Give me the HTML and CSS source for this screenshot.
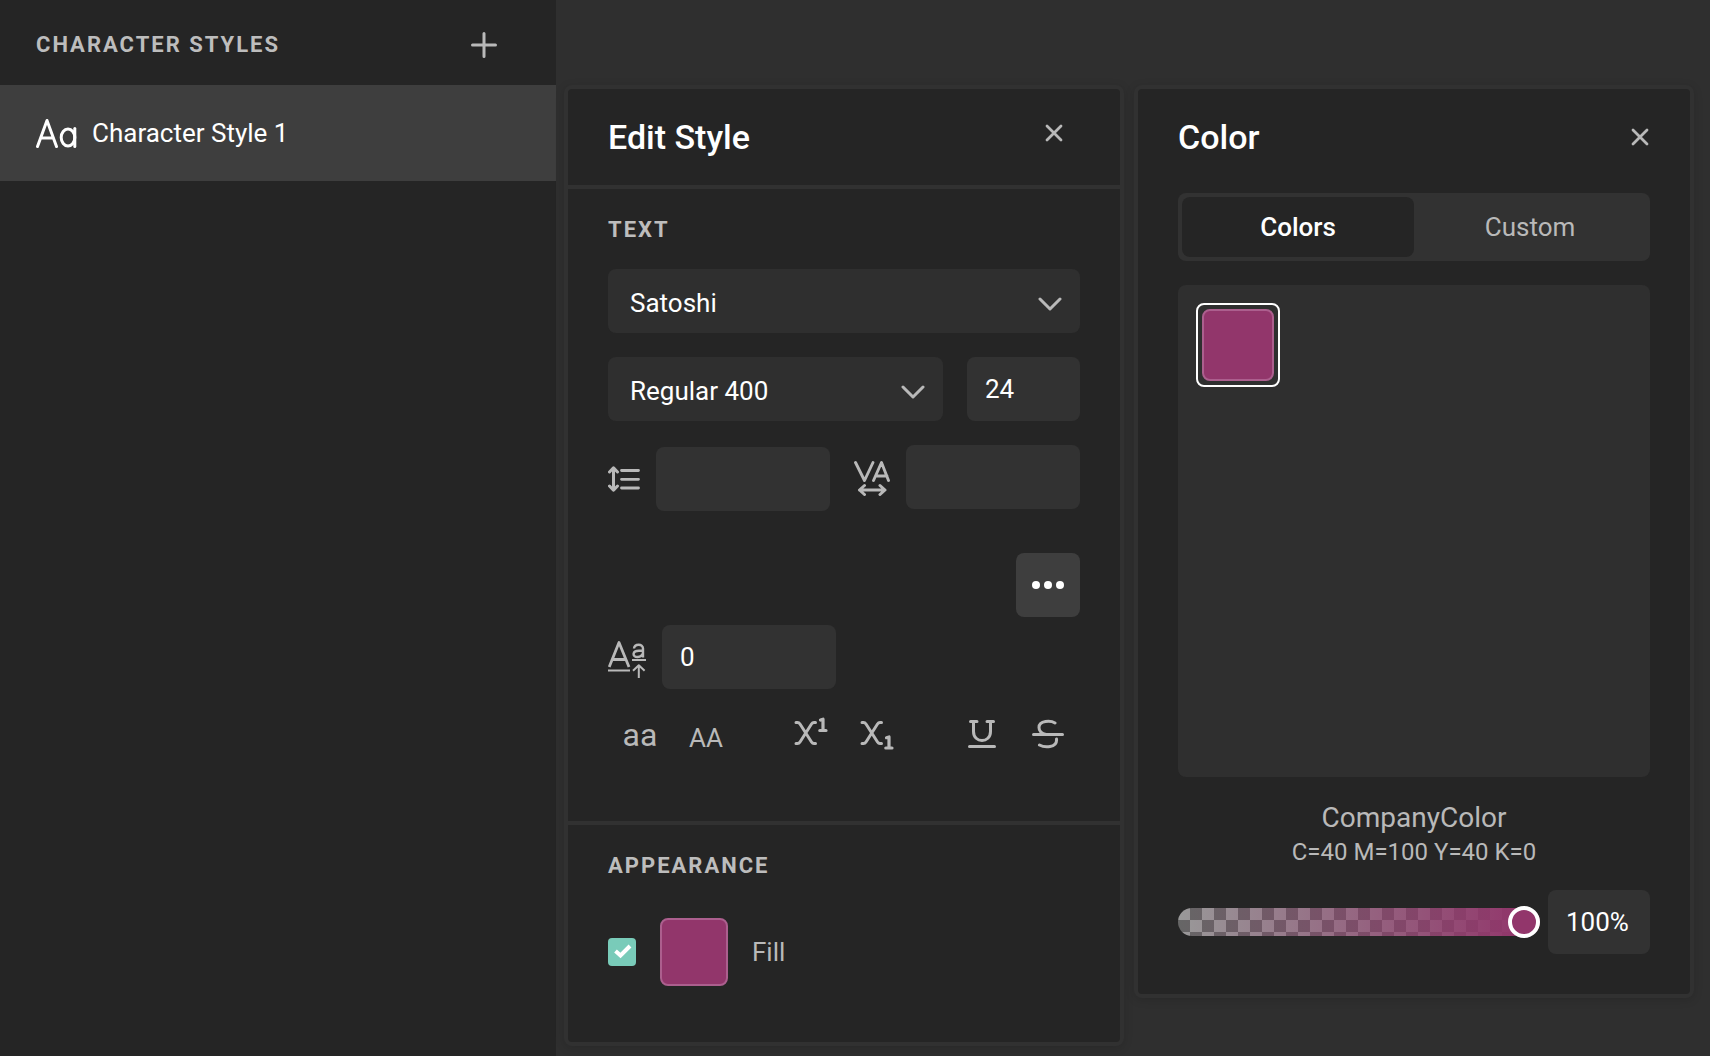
FILE: index.html
```html
<!DOCTYPE html>
<html lang="en">
<head>
<meta charset="utf-8">
<title>Character Styles</title>
<meta name="viewport" content="width=device-width, initial-scale=1">
<link rel="stylesheet" href="styles.css">
</head>
<body>
<div class="app">
  <aside class="sidebar">
    <header class="sidebar-header">
      <h2 class="caps">CHARACTER STYLES</h2>
      <button class="icon-button add" type="button" aria-label="Add character style">
        <svg width="26" height="26" viewBox="0 0 26 26"><path d="M13 1.500v23M1.500 13h23" stroke-width="3"/></svg>
      </button>
    </header>
    <button class="style-item" type="button">
      <svg width="41" height="30" viewBox="0 0 41 30"><path d="M1.500 28.500L11 2.500L20.500 28.500M5 20H17.500" stroke-width="3"/><ellipse cx="32" cy="19.500" rx="6.800" ry="8.500" stroke-width="3"/><path d="M38.800 10.500V28.500" stroke-width="3"/></svg>
      <span>Character Style 1</span>
    </button>
  </aside>

  <main class="workspace">
    <section class="panel" aria-labelledby="edit-title">
      <header class="panel-header">
        <h1 id="edit-title" class="title">Edit Style</h1>
        <button class="icon-button close-wide" type="button" aria-label="Close edit style">
          <svg width="18" height="18" viewBox="0 0 18 18"><path d="M2 2l14 14M16 2L2 16" stroke-width="2.800"/></svg>
        </button>
      </header>

      <div class="section text-section">
        <h2 class="caps">TEXT</h2>
        <div class="rows">
          <div class="select">
            <select aria-label="Font family"><option>Satoshi</option></select>
            <svg width="24" height="14" viewBox="0 0 24 14"><path d="M2 2l10 10L22 2" stroke-width="3"/></svg>
          </div>
          <div class="row weight-row">
            <div class="select">
              <select aria-label="Font weight"><option>Regular 400</option></select>
              <svg width="24" height="14" viewBox="0 0 24 14"><path d="M2 2l10 10L22 2" stroke-width="3"/></svg>
            </div>
            <input class="field size" type="text" value="24" aria-label="Font size">
          </div>
          <div class="row spacing-row">
            <label class="metric leading">
              <svg width="32" height="26" viewBox="0 0 32 26"><path d="M5.500 2V24M1.500 6L5.500 1.800L9.500 6M1.500 20L5.500 24.200L9.500 20" stroke-width="3"/><path d="M13.500 4.500h17M13.500 13.300h17M13.500 22h17" stroke-width="2.800"/></svg>
              <input class="field" type="text" aria-label="Line height">
            </label>
            <label class="metric tracking">
              <svg width="36" height="36" viewBox="0 0 36 36"><path d="M1.500 2.500L10.500 20.500L19 2.500M19.500 20.500L27.500 2.500L34.500 20.500M22 16H33" stroke-width="2.900"/><path d="M5.500 30H30.500M10.500 25.500L5.500 30L10.500 34.500M26 25.500L31 30L26 34.500" stroke-width="3"/></svg>
              <input class="field" type="text" aria-label="Letter spacing">
            </label>
          </div>
        </div>
        <button class="more" type="button" aria-label="More text options">
          <svg width="32" height="8" viewBox="0 0 32 8"><circle cx="4" cy="4" r="4"/><circle cx="16" cy="4" r="4"/><circle cx="28" cy="4" r="4"/></svg>
        </button>
        <label class="metric shift">
          <svg width="38" height="38" viewBox="0 0 38 38"><path d="M1.200 26L11 1.500L21 26M5 18.500H17.500" stroke-width="2.800"/><path d="M0 29.500H22M24 19H38" stroke-width="2.200"/><path d="M26 7.500C26.500 2.500 35 2.500 35 7.500V16.500M35 9.800H31C24 9.800 24 16 29.500 16C33 16 35 13.500 35 11.500" stroke-width="2.400"/><path d="M30.800 37V25M25 29.800L30.800 24.200L36.600 29.800" stroke-width="2"/></svg>
          <input class="field" type="text" value="0" aria-label="Baseline shift">
        </label>
        <div class="toggles">
          <div class="toggle-group">
            <button class="toggle lower" type="button" aria-label="Lowercase">aa</button>
            <button class="toggle small-caps" type="button" aria-label="Small caps">AA</button>
          </div>
          <div class="toggle-group">
            <button class="toggle" type="button" aria-label="Superscript">
              <svg width="34" height="36" viewBox="0 0 34 36"><path d="M2 6.500H3.500Q5 6.500 6 8L17.500 26Q18.500 27.500 20 27.500H21.500M21.500 6.500H20Q18.500 6.500 17.500 8L6 26Q5 27.500 3.500 27.500H2" stroke-width="3"/><path d="M26.500 4L29 3.200V14.500M25.800 14.500H32" stroke-width="3.200"/></svg>
            </button>
            <button class="toggle" type="button" aria-label="Subscript">
              <svg width="34" height="36" viewBox="0 0 34 36"><path d="M2 6.500H3.500Q5 6.500 6 8L17.500 26Q18.500 27.500 20 27.500H21.500M21.500 6.500H20Q18.500 6.500 17.500 8L6 26Q5 27.500 3.500 27.500H2" stroke-width="3"/><path d="M26.500 21.700L29 21V32M25.800 32H32" stroke-width="3.200"/></svg>
            </button>
          </div>
          <div class="toggle-group">
            <button class="toggle" type="button" aria-label="Underline">
              <svg width="34" height="30" viewBox="0 0 34 30"><path d="M5.500 2.500H12M22 2.500H28.500M8.500 2.500V12.500C8.500 24.500 25.500 24.500 25.500 12.500V2.500" stroke-width="3"/><path d="M4.500 27.500H29.500" stroke-width="3"/></svg>
            </button>
            <button class="toggle" type="button" aria-label="Strikethrough">
              <svg width="34" height="30" viewBox="0 0 34 30"><path d="M2.500 15.500H31.500" stroke-width="3"/><path d="M24 4C20 1.500 8 1 8 8.500C8 12 11 14.500 15 15.500M25.500 20C26.500 29.500 13 28.500 8.500 26" stroke-width="3"/></svg>
            </button>
          </div>
        </div>
      </div>

      <div class="section appearance-section">
        <h2 class="caps">APPEARANCE</h2>
        <div class="fill-row">
          <span class="check">
            <input id="fill" type="checkbox" checked>
            <svg width="28" height="28" viewBox="0 0 28 28"><path d="M7.500 13L12.500 17.500L22 8" stroke-width="4"/></svg>
          </span>
          <button class="swatch" type="button" aria-label="Fill color"></button>
          <label for="fill">Fill</label>
        </div>
      </div>
    </section>

    <section class="panel color-panel" aria-labelledby="color-title">
      <header class="color-header">
        <h1 id="color-title" class="title">Color</h1>
        <button class="icon-button close" type="button" aria-label="Close color">
          <svg width="18" height="18" viewBox="0 0 18 18"><path d="M2 2l14 14M16 2L2 16" stroke-width="2.800"/></svg>
        </button>
      </header>
      <div class="tabs" role="tablist">
        <button class="tab active" type="button" role="tab" aria-selected="true">Colors</button>
        <button class="tab" type="button" role="tab" aria-selected="false">Custom</button>
      </div>
      <div class="palette">
        <button class="ring" type="button" aria-label="CompanyColor"><span class="chip"></span></button>
      </div>
      <p class="color-name">CompanyColor</p>
      <p class="color-value">C=40 M=100 Y=40 K=0</p>
      <div class="opacity-row">
        <input class="slider" type="range" min="0" max="100" value="100" aria-label="Opacity">
        <input class="field percent" type="text" value="100%" aria-label="Opacity percent">
      </div>
    </section>
  </main>
</div>
</body>
</html>
```
FILE: styles.css
```css
:root {
  --surface: #252525;
  --canvas: #2f2f2f;
  --line: #313131;
  --field: #323232;
  --raised: #3e3e3e;
  --muted: #b9b9b9;
  --fill: #92366b;
  --fill-edge: #ac5f8e;
}

* { box-sizing: border-box; }

body {
  margin: 0;
  background: var(--canvas);
  color: #fff;
  font: 400 26px/32px Roboto, "Liberation Sans", sans-serif;
}

h1, h2, p { margin: 0; }

button, input, select {
  margin: 0;
  padding: 0;
  border: 0;
  background: none;
  color: inherit;
  font: inherit;
}

svg {
  display: block;
  flex: none;
  fill: none;
  stroke: var(--muted);
  stroke-linecap: round;
  stroke-linejoin: round;
}

.app {
  display: grid;
  grid-template-columns: 556fr 1154fr;
  min-height: 100vh;
}

.sidebar { background: var(--surface); }

.sidebar-header {
  display: flex;
  align-items: center;
  justify-content: space-between;
  height: 85px;
  padding: 5px 56px 0 36px;
}

.caps {
  color: #bdbdbd;
  font-size: 22px;
  font-weight: 700;
  line-height: 24px;
  letter-spacing: 2px;
}

.icon-button {
  display: flex;
  align-items: center;
  justify-content: center;
}

.add { width: 32px; height: 32px; }

.style-item {
  display: flex;
  align-items: center;
  gap: 15px;
  width: 100%;
  height: 96px;
  padding: 0 36px;
  background: var(--raised);
  text-align: left;
}

.style-item svg { stroke: #fff; }

.workspace {
  display: grid;
  grid-template-columns: 1fr 1fr;
  align-items: start;
  gap: 10px;
  padding: 85px 16px 9px 8px;
}

.panel {
  border: 4px solid var(--line);
  border-radius: 8px;
  background: var(--surface);
  box-shadow: 0 2px 10px rgba(0, 0, 0, .14);
}

.panel-header {
  display: flex;
  align-items: flex-start;
  justify-content: space-between;
  padding: 28px 40px;
}

.title {
  font-size: 34px;
  font-weight: 500;
  line-height: 40px;
}

.close-wide { width: 52px; height: 32px; }
.close { width: 20px; height: 40px; }

.section {
  padding: 29px 40px 56px;
  border-top: 4px solid var(--line);
}

.rows {
  display: grid;
  gap: 24px;
  margin-top: 27px;
}

.row { display: flex; gap: 24px; }

.select {
  display: grid;
  flex: 1;
  align-items: center;
  height: 64px;
  border-radius: 8px;
  background: var(--canvas);
}

.select select, .select svg { grid-area: 1 / 1; }

.select select {
  width: 100%;
  height: 64px;
  padding: 4px 56px 0 22px;
  appearance: none;
}

.select svg {
  justify-self: end;
  margin: 6px 18px 0 0;
  pointer-events: none;
}

.field {
  height: 64px;
  min-width: 0;
  padding: 0 18px;
  border-radius: 8px;
  background: var(--field);
}

.size { width: 113px; }

.metric { display: flex; align-items: center; gap: 16px; }
.metric .field { width: 174px; }
.spacing-row { justify-content: space-between; height: 66px; }
.leading { align-self: flex-end; }
.tracking { align-self: flex-start; }
.tracking svg { margin-top: 2px; }

.more {
  display: flex;
  align-items: center;
  justify-content: center;
  width: 64px;
  height: 64px;
  margin: 42px 0 8px auto;
  border-radius: 8px;
  background: var(--raised);
}

.more svg { fill: #fff; stroke: none; }

.shift svg {
  margin-top: 6px;
  stroke-linecap: butt;
}

.toggles {
  display: flex;
  justify-content: space-between;
  margin-top: 13px;
}

.toggle-group { display: flex; gap: 2px; }

.toggle {
  display: flex;
  align-items: center;
  justify-content: center;
  width: 64px;
  height: 64px;
  color: var(--muted);
}

.lower { padding-top: 2px; font-size: 32px; }
.small-caps { padding-top: 8px; }

.text-section { padding-bottom: 55px; }

.fill-row {
  display: flex;
  align-items: center;
  gap: 24px;
  margin-top: 40px;
  color: var(--muted);
}

.check { display: grid; }
.check input, .check svg { grid-area: 1 / 1; }

.check input {
  width: 28px;
  height: 28px;
  border-radius: 4px;
  background: #79cbb9;
  appearance: none;
}

.check svg {
  stroke: #fff;
  stroke-linecap: butt;
  stroke-linejoin: miter;
  pointer-events: none;
}

.swatch, .chip {
  border: 2px solid var(--fill-edge);
  border-radius: 8px;
  background: var(--fill);
}

.swatch { width: 68px; height: 68px; }

.color-panel { padding: 28px 40px 40px; }

.color-header {
  display: flex;
  justify-content: space-between;
  margin-bottom: 36px;
}

.tabs {
  display: grid;
  grid-template-columns: 1fr 1fr;
  padding: 4px;
  border-radius: 8px;
  background: var(--field);
}

.tab {
  height: 60px;
  border-radius: 8px;
  color: var(--muted);
}

.tab.active {
  background: var(--surface);
  color: #fff;
  font-weight: 500;
}

.palette {
  height: 492px;
  margin: 24px 0 25px;
  padding: 18px;
  border-radius: 8px;
  background: var(--canvas);
}

.ring {
  display: grid;
  width: 84px;
  height: 84px;
  padding: 4px;
  border: 2px solid #fff;
  border-radius: 8px;
}

.color-name, .color-value {
  color: var(--muted);
  text-align: center;
}

.color-name { font-size: 28px; }
.color-value { font-size: 24px; line-height: 36px; }

.opacity-row {
  display: flex;
  align-items: center;
  gap: 8px;
  margin-top: 20px;
}

.slider {
  flex: 1;
  min-width: 0;
  height: 28px;
  border-radius: 14px;
  background:
    linear-gradient(to right, transparent, var(--fill) 96%),
    repeating-conic-gradient(#666 0 25%, #999 0 50%) 0 0 / 24px 24px;
  appearance: none;
}

.slider::-webkit-slider-thumb {
  width: 32px;
  height: 32px;
  border: 4px solid #fff;
  border-radius: 50%;
  background: var(--fill);
  appearance: none;
}

.percent { width: 102px; }
```
